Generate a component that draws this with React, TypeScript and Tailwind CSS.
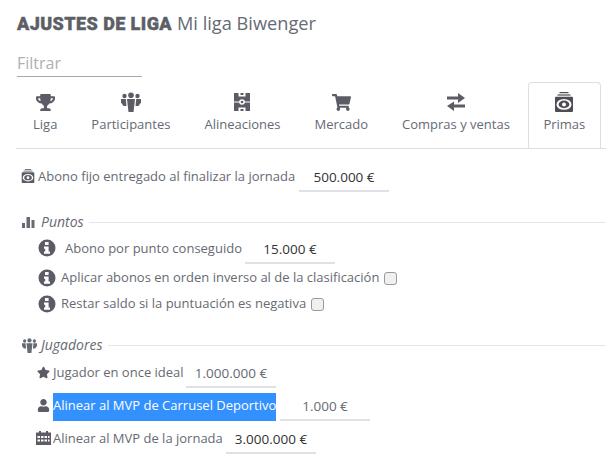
import React from "react";
import { FaTrophy, FaShoppingCart, FaStar, FaUser } from "react-icons/fa";

const Group = ({ s = 18 }: { s?: number }) => (
  <svg width={s} height={s} viewBox="0 0 20 20" fill="currentColor">
    <circle cx="10" cy="3.200" r="2.800" />
    <circle cx="3.500" cy="4" r="2.200" />
    <circle cx="16.500" cy="4" r="2.200" />
    <path d="M6 7h8l-.8 7-.7 6H7.500l-.7-6z" />
    <path d="M0 7h4.800l.7 7H2.500L0 10.500z" />
    <path d="M20 7h-4.800l-.7 7h3l2.500-3.500z" />
  </svg>
);
const Pitch = ({ s = 18 }: { s?: number }) => (
  <svg width={s} height={s} viewBox="0 0 18 18">
    <rect x="1" y="0" width="16" height="18" fill="currentColor" />
    <rect x="5.500" y="0" width="7" height="3.500" fill="#fff" />
    <rect x="7.500" y="0" width="3" height="2" fill="currentColor" />
    <rect x="5.500" y="14.500" width="7" height="3.500" fill="#fff" />
    <rect x="7.500" y="16" width="3" height="2" fill="currentColor" />
    <rect x="1" y="8.500" width="16" height="1" fill="#fff" />
    <circle cx="9" cy="9" r="2.800" fill="#fff" />
    <circle cx="9" cy="9" r="1.300" fill="currentColor" />
  </svg>
);
const Exchange = () => (
  <svg width="20" height="18" viewBox="0 0 20 18" fill="currentColor">
    <path d="M1 3.500h11V0l7 5-7 5V6.500H1z" />
    <path d="M19 11.500H8V8.500L1 13l7 5v-3.500h11z" />
  </svg>
);
const CameraEye = ({ s = 20 }: { s?: number }) => (
  <svg width={s} height={s} viewBox="0 0 20 20">
    <rect x="5.500" y="0" width="9" height="1.200" fill="currentColor" />
    <rect x="3.500" y="2.400" width="13" height="1.200" fill="currentColor" />
    <rect x="1" y="4.800" width="18" height="15.200" rx="1" fill="currentColor" />
    <ellipse cx="10" cy="12.400" rx="7.500" ry="5.400" fill="#fff" />
    <ellipse cx="10" cy="12.400" rx="5.400" ry="3.800" fill="currentColor" />
    <circle cx="10" cy="12.400" r="2" fill="#fff" />
  </svg>
);
const Bars = () => (
  <svg width="13" height="12" viewBox="0 0 13 12" fill="currentColor">
    <rect x="0" y="7" width="3" height="5" />
    <rect x="4.500" y="1" width="3.500" height="11" />
    <rect x="9.500" y="4" width="3" height="8" />
  </svg>
);
const Calendar = () => (
  <svg width="15" height="14" viewBox="0 0 15 14" fill="currentColor">
    <rect x="3" y="0" width="2" height="3" />
    <rect x="10" y="0" width="2" height="3" />
    <path d="M0 1.500h15V14H0zM1.500 5v2h2.500V5zM5 5v2h2.500V5zM8.500 5v2H11V5zM12 5v2h1.500V5zM1.500 8.500v2h2.500v-2zM5 8.500v2h2.500v-2zM8.500 8.500v2H11v-2zM12 8.500v2h1.500v-2z" fillRule="evenodd" />
  </svg>
);
const InfoGlyph = () => (
  <svg width="18" height="18" viewBox="0 0 18 18" className="shrink-0 text-[#5c5c66]">
    <circle cx="9" cy="9" r="8.500" fill="currentColor" />
    <rect x="7" y="3" width="3.600" height="3" fill="#fff" />
    <path d="M6 7.500h4.600v5H12v2.200H6v-2.200h1.200V9.700H6z" fill="#fff" />
  </svg>
);

const tabs: [string, React.ReactNode][] = [
  ["Liga", <FaTrophy size={19} />],
  ["Participantes", <Group s={20} />],
  ["Alineaciones", <Pitch s={18} />],
  ["Mercado", <FaShoppingCart size={19} />],
  ["Compras y ventas", <Exchange />],
];

const Val = ({ children, className }: { children: React.ReactNode; className?: string }) => (
  <div className={`w-[90px] h-[28px] border-b-2 border-[#e0e0e6] text-center text-[13.500px] leading-[26px] ${className ?? ""}`}>{children}</div>
);
const Check = () => (
  <span className="inline-block w-[13px] h-[13px] rounded-[3px] border border-[#9a9a9a] bg-[#f0f0f0]" />
);

const Legend = ({ icon, children }: { icon: React.ReactNode; children: React.ReactNode }) => (
  <div className="flex items-center pl-[22px] h-[18px] text-[#666a73]">
    <span className="w-[19px] shrink-0 flex">{icon}</span>
    <span className="italic text-[14px] leading-[18px]">{children}</span>
    <span className="flex-1 h-px bg-[#e6e6e9] ml-[5px]" />
  </div>
);

export default function App() {
  return (
    <div className="w-[606px] h-[474px] overflow-hidden bg-white text-[13px] text-[#666a73] font-['Open_Sans',sans-serif]">
      <div className="pl-[17px] pt-[11px] h-[46px] flex items-baseline text-[18.200px] leading-[24px]">
        <span className="font-['Roboto',sans-serif] font-black text-[#5c5f66] text-[18px] tracking-[0.42px] mr-[5px] [-webkit-text-stroke:0.4px_#5c5f66]">AJUSTES DE LIGA</span>
        <span>Mi liga Biwenger</span>
      </div>
      <div className="ml-[17px] mt-[4px] w-[125px] h-[27px] border-b border-[#a8a8a8] text-[16px] leading-[26px] text-[#b0b0b0]">Filtrar</div>
      <div className="ml-[16px] mt-[5px] h-[67px] border-b border-[#dedede] flex">
        {tabs.map(([label, icon]) => (
          <div key={label} className="px-[17px] pt-[10px] flex flex-col items-center text-[13px] text-[#666a73] whitespace-nowrap">
            <span className="h-[20px] flex items-center text-[#5c5c66]">{icon}</span>
            <span className="leading-[18px] mt-[3px]">{label}</span>
          </div>
        ))}
        <div className="ml-[1px] w-[73px] h-[66px] border border-b-0 border-[#dedede] rounded-t-[4px] bg-white pt-[9px] flex flex-col items-center">
          <span className="h-[20px] flex items-center text-[#4d4d55]"><CameraEye s={20} /></span>
          <span className="leading-[18px] mt-[3px]">Primas</span>
        </div>
      </div>

      <div className="pl-[21px] mt-[15px] flex items-start">
        <span className="mt-[5px] w-[17px] shrink-0 text-[#5c5c66]"><CameraEye s={14} /></span>
        <span className="leading-[20px] mt-[2px] w-[261px]">Abono fijo entregado al finalizar la jornada</span>
        <Val className="text-[#333]">500.000 €</Val>
      </div>

      <div className="mt-[21px]"><Legend icon={<Bars />}>Puntos</Legend></div>
      <div className="pl-[38px] mt-[5px] flex items-start">
        <span className="mt-[3px]"><InfoGlyph /></span>
        <span className="leading-[20px] ml-[9px] mt-[2px] w-[180px]">Abono por punto conseguido</span>
        <Val className="text-[#333]">15.000 €</Val>
      </div>
      <div className="pl-[38px] mt-[1px] h-[26px] flex items-center">
        <InfoGlyph /><span className="ml-[5px] mr-[5px]">Aplicar abonos en orden inverso al de la clasificación</span><Check />
      </div>
      <div className="pl-[38px] h-[26px] flex items-center">
        <InfoGlyph /><span className="ml-[5px] mr-[5px]">Restar saldo si la puntuación es negativa</span><Check />
      </div>

      <div className="mt-[19px]"><Legend icon={<Group s={15} />}>Jugadores</Legend></div>
      <div className="pl-[37px] mt-[6px] flex items-start">
        <FaStar size={13} className="mt-[6px] text-[#5c5c66] shrink-0" />
        <span className="leading-[20px] ml-[3px] mt-[2px] w-[133px]">Jugador en once ideal</span>
        <Val>1.000.000 €</Val>
      </div>
      <div className="pl-[37px] mt-[5px] flex items-start">
        <FaUser size={13} className="mt-[6px] text-[#5c5c66] shrink-0" />
        <span className="ml-[3px] h-[28px] w-[223px] bg-[#3390ff] text-white leading-[24px] whitespace-nowrap overflow-hidden">Alinear al MVP de Carrusel Deportivo</span>
        <Val className="ml-[4px]">1.000 €</Val>
      </div>
      <div className="pl-[36px] mt-[5px] flex items-start">
        <span className="mt-[5px] text-[#5c5c66] shrink-0"><Calendar /></span>
        <span className="leading-[20px] ml-[2px] mt-[2px] w-[173px]">Alinear al MVP de la jornada</span>
        <Val className="text-[#333]">3.000.000 €</Val>
      </div>
    </div>
  );
}
